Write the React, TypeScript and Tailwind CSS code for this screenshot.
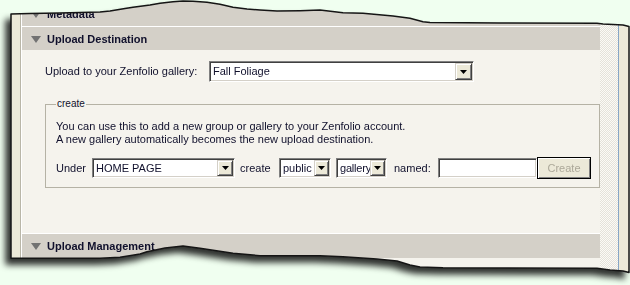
import React from "react";

const PTS: [number, number][] = [
  [0, 14], [19, 13.5], [49, 13], [89, 12], [99, 11], [114, 8.5], [122, 7.3], [139, 5], [149, 3.3], [162, 1.7], [172, 1], [182, 1.3], [196, 2.3], [209, 4.3], [222, 7.3], [236, 9], [249, 10], [266, 11], [289, 10.7], [309, 10], [332, 12.7], [352, 13.3], [382, 16], [399, 18.3], [412, 21.7], [419, 22.5], [489, 23], [586, 23.3], [592, 24], [612, 25], [618, 26.5],
  [618, 272.5], [612, 271], [599, 270], [586, 268.3], [432, 267.7], [409, 267], [399, 265], [386, 261], [366, 259], [332, 256.7], [309, 255.7], [249, 255.7], [222, 253.3], [189, 248.3], [172, 246], [154, 248], [136, 251.7], [129, 254], [109, 257.3], [89, 258.3], [0, 258.3],
];

const edgePath = "M " + PTS.map(([x, y]) => `${x + 11} ${y}`).join(" L ") + " Z";

function Tri() {
  return (
    <svg width="10" height="7" viewBox="0 0 10 7" className="shrink-0">
      <path d="M0 0H10L5 7Z" fill="#727272" />
    </svg>
  );
}

function Band({ label, cls }: { label: string; cls: string }) {
  return (
    <div className={"flex items-center gap-[6px] pl-[9px] bg-[#d4d0c8] font-bold text-[11px] " + cls}>
      <Tri />
      <span className="leading-none">{label}</span>
    </div>
  );
}

function Select({ value, cls, vcls = "", bcls = "w-[15px]" }: { value: string; cls: string; vcls?: string; bcls?: string }) {
  return (
    <div
      className={
        "flex shrink-0 bg-white border border-t-[#808080] border-l-[#808080] border-r-white border-b-white shadow-[inset_1px_1px_0_#404040,inset_-1px_-1px_0_#d4d0c8] p-[1px] " +
        cls
      }
    >
      <div className={"flex-1 flex items-center pl-[2px] overflow-hidden whitespace-nowrap " + vcls}>{value}</div>
      <div className={"shrink-0 h-full flex items-center justify-center bg-[#ece9d8] border border-t-[#d4d0c8] border-l-[#d4d0c8] border-r-[#404040] border-b-[#404040] shadow-[inset_1px_1px_0_#ffffff,inset_-1px_-1px_0_#808080] " + bcls}>
        <svg width="7" height="4" viewBox="0 0 7 4">
          <path d="M0 0H7L3.5 4Z" fill="#000" />
        </svg>
      </div>
    </div>
  );
}

export default function App() {
  return (
    <div className="w-[630px] h-[285px] overflow-hidden bg-[#f0fff0] [font-family:'Liberation_Sans',Arial,sans-serif] text-[#10102c]">
      <div className="relative w-[630px] h-[285px] [filter:drop-shadow(-5px_6px_3px_rgba(0,0,0,0.8))]">
        <div className="ml-[11px] w-[619px] h-[285px] flex bg-[#ece9d8] [clip-path:polygon(0px_14px,19px_13.5px,49px_13px,89px_12px,99px_11px,114px_8.5px,122px_7.3px,139px_5px,149px_3.3px,162px_1.7px,172px_1px,182px_1.3px,196px_2.3px,209px_4.3px,222px_7.3px,236px_9px,249px_10px,266px_11px,289px_10.7px,309px_10px,332px_12.7px,352px_13.3px,382px_16px,399px_18.3px,412px_21.7px,419px_22.5px,489px_23px,586px_23.3px,592px_24px,612px_25px,618px_26.5px,618px_272.5px,612px_271px,599px_270px,586px_268.3px,432px_267.7px,409px_267px,399px_265px,386px_261px,366px_259px,332px_256.7px,309px_255.7px,249px_255.7px,222px_253.3px,189px_248.3px,172px_246px,154px_248px,136px_251.7px,129px_254px,109px_257.3px,89px_258.3px,0px_258.3px)]">
          <div className="w-[9px] shrink-0" />
          <div className="w-px shrink-0 bg-[#b9b6a8]" />
          <div className="w-[579px] shrink-0 border-l border-white bg-[#f5f3ed] flex flex-col text-[11px]">
            <Band label="Metadata" cls="h-[26px] pt-[3px]" />
            <div className="h-px bg-white" />
            <Band label="Upload Destination" cls="h-[23px] pt-[1px]" />
            <div className="h-[183px] flex flex-col pl-[23px]">
              <div className="mt-[11px] flex items-center h-[21px]">
                <span className="w-[164px] shrink-0">Upload to your Zenfolio gallery:</span>
                <Select value="Fall Foliage" cls="w-[265px] h-[21px]" bcls="w-[17px]" />
              </div>
              <div className="mt-[22px] relative h-[84px] w-[555px] border border-[#b5b2a5] pl-[10px] pt-[15px]">
                <span className="absolute left-[10px] top-[-7px] px-[1px] bg-[#f5f3ed] text-[10px] leading-[12px]">create</span>
                <div className="leading-[13px]">
                  <div>You can use this to add a new group or gallery to your Zenfolio account.</div>
                  <div>A new gallery automatically becomes the new upload destination.</div>
                </div>
                <div className="mt-[11px] h-[22px] flex items-center">
                  <span className="w-[36px] shrink-0">Under</span>
                  <Select value="HOME PAGE" cls="w-[143px] h-[20px]" bcls="w-[16px]" />
                  <span className="ml-[5px] w-[39px] shrink-0">create</span>
                  <Select value="public" cls="w-[52px] h-[20px]" />
                  <Select value="gallery" cls="ml-[5px] w-[51px] h-[20px]" vcls="pl-[1px] tracking-[-0.2px]" />
                  <span className="ml-[7px] w-[44px] shrink-0">named:</span>
                  <div className="w-[99px] h-[20px] shrink-0 bg-white border border-t-[#808080] border-l-[#808080] border-r-white border-b-white shadow-[inset_1px_1px_0_#404040,inset_-1px_-1px_0_#d4d0c8]" />
                  <div className="w-[54px] h-[22px] shrink-0 border border-black bg-[#ece9d8] shadow-[inset_1px_1px_0_#ffffff,inset_-1px_-1px_0_#808080] flex items-center justify-center text-[#aca899]">
                    Create
                  </div>
                </div>
              </div>
            </div>
            <div className="h-px bg-white" />
            <Band label="Upload Management" cls="h-[24px] pt-[1px]" />
            <div className="flex-1" />
          </div>
          <div className="w-[18px] shrink-0 bg-[repeating-conic-gradient(#e4e2da_0%_25%,#fbfaf6_0%_50%)] bg-[length:2px_2px]" />
          <div className="w-px shrink-0 bg-[#86a5c6]" />
          <div className="flex-1" />
        </div>
        <svg className="absolute inset-0 pointer-events-none" width="630" height="285" viewBox="0 0 630 285">
          <path d={edgePath} fill="none" stroke="#151515" strokeWidth="1.5" strokeLinejoin="round" />
        </svg>
      </div>
    </div>
  );
}
